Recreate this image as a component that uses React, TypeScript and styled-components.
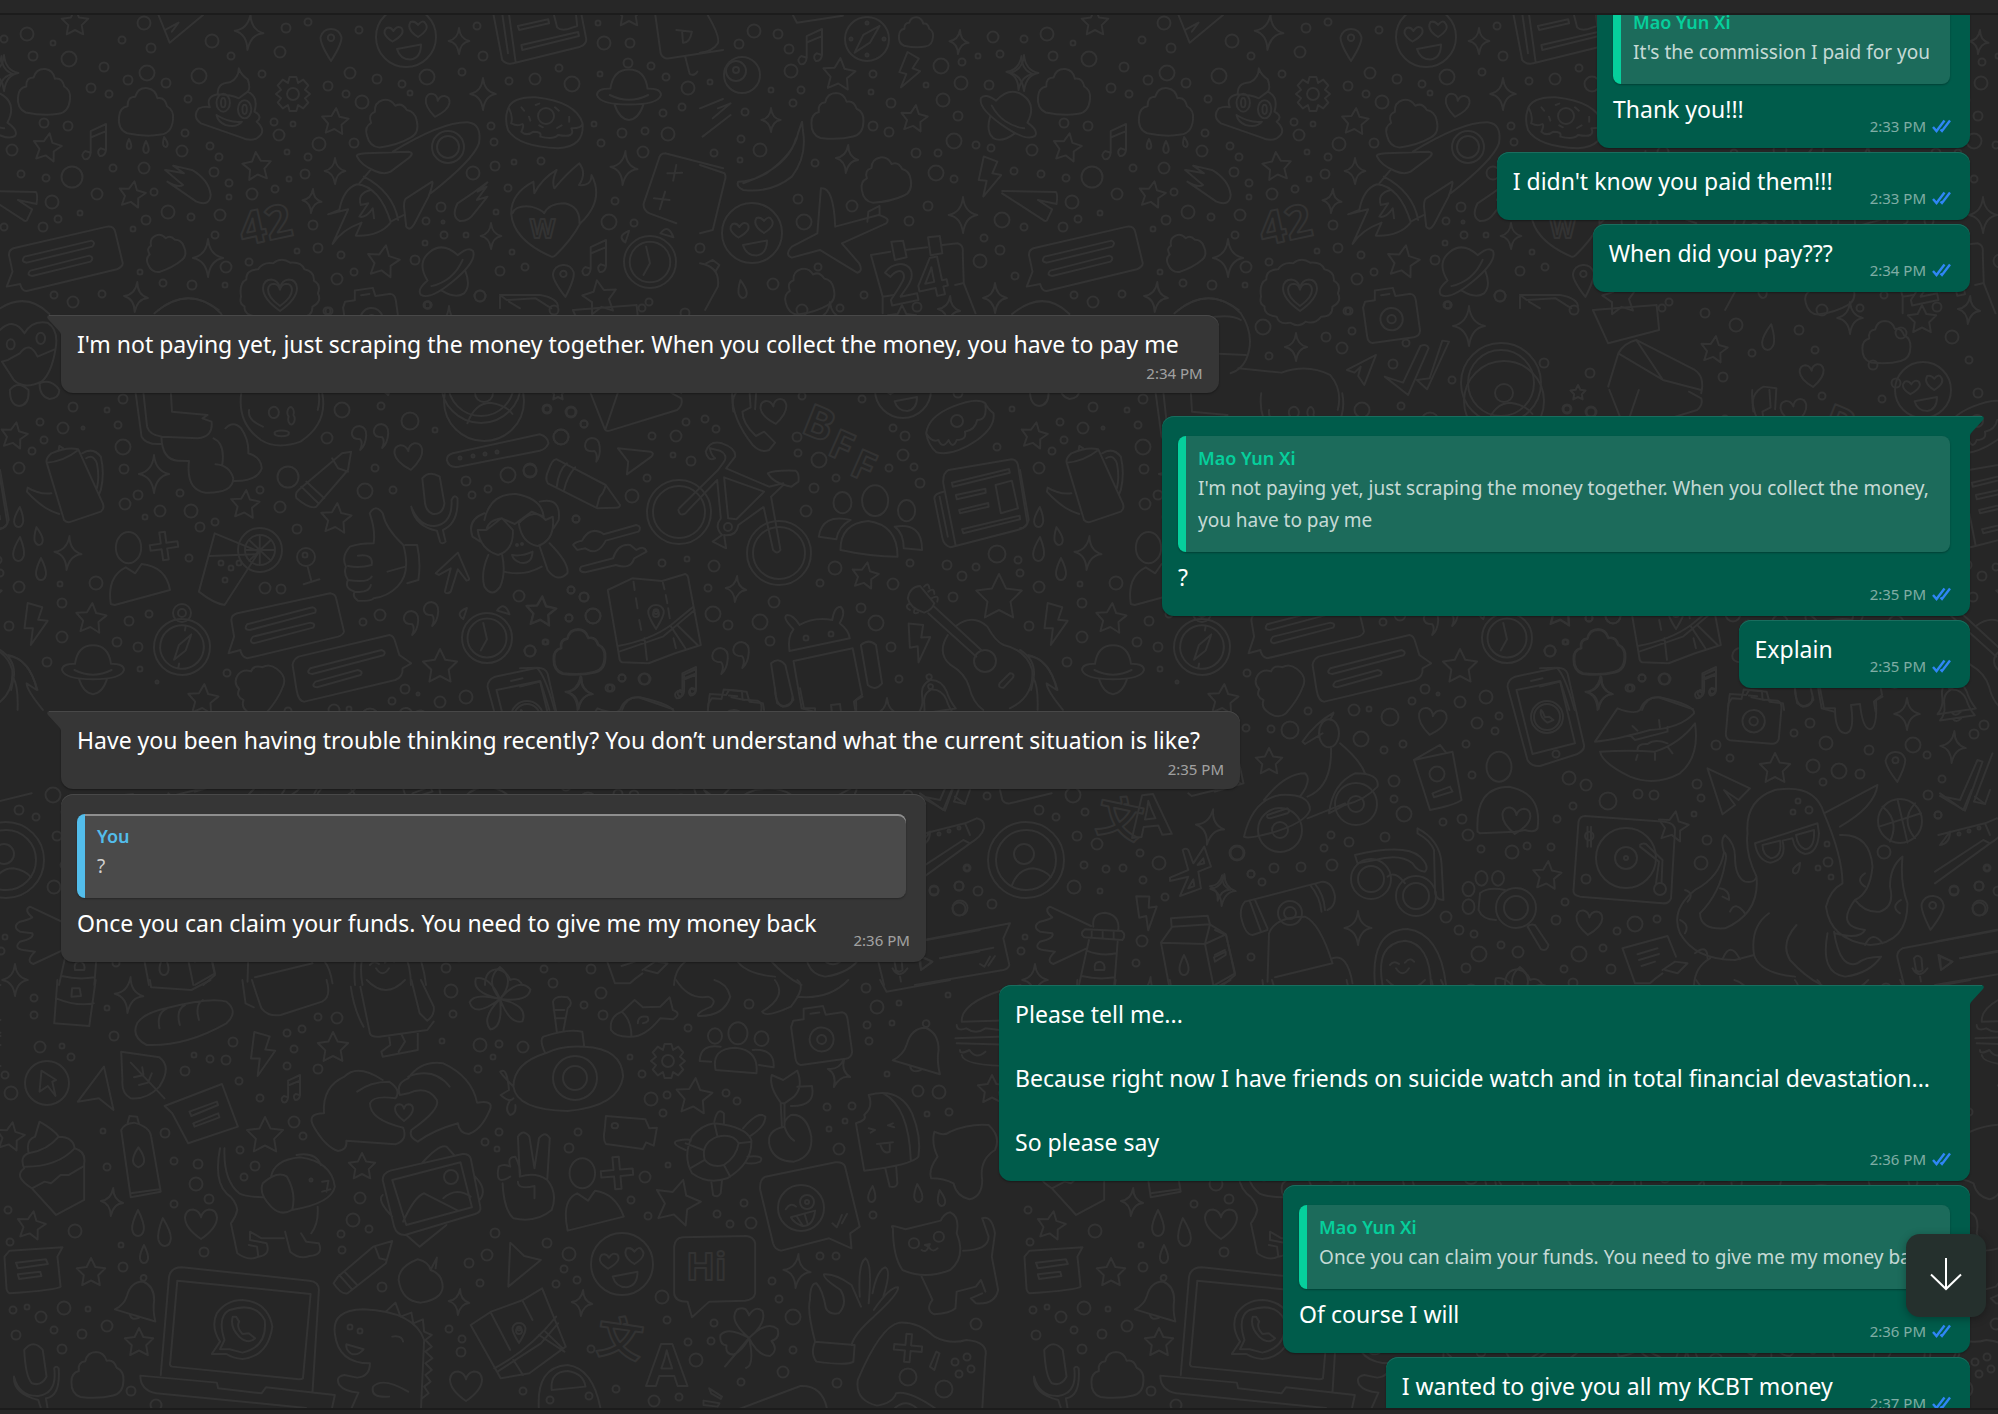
import React, { useLayoutEffect, useRef } from "react";
import styled, { createGlobalStyle } from "styled-components";

/* ---------- theme ---------- */

const color = {
  chrome: "#272727",
  edge: "#1c1c1c",
  wallpaper: "#262626",
  doodle: "#333333",
  outgoing: "#005c4b",
  outgoingEdge: "#1a6d5e",
  outgoingQuote: "#1c6b5b",
  incoming: "#363636",
  incomingEdge: "#484848",
  incomingQuote: "#4a4a4a",
  green: "#06cf9c",
  blue: "#53bdeb",
  tick: "#2f86f6",
};

const GlobalStyle = createGlobalStyle`
  *, *::before, *::after { box-sizing: border-box; }
  html, body { margin: 0; background: ${color.chrome}; }
  body { font-family: "Noto Sans", "Open Sans", sans-serif; color: #fff; }
  p { margin: 0; }
`;

/* ---------- wallpaper ---------- */

type Sheet = {
  ox: number;
  oy: number;
  sx: number;
  dots: string;
  stars?: string;
  sparkles?: string;
  shapes?: string;
  rings?: string;
  lines: string[];
};

const TILE = 1020;

const glyphs: Record<string, string> = {
  cloud:
    "M-.7.75Q-1.05.6-1 .15Q-.98-.2-.68-.25Q-.7-.6-.4-.6Q-.3-.95.05-.92Q.35-.88.42-.55Q.7-.6.78-.25Q1.05-.1 1 .25Q.95.75.55.8Q0 .9-.7.75Z",
  heart: "M0 1Q-1 .3-1-.35Q-.95-.85-.5-.85Q-.1-.8 0-.35Q.1-.8.5-.85Q.95-.85 1-.35Q1 .3 0 1Z",
  drop: "M0-1Q-.5 0-.45.5Q-.35 1 0 1Q.35 1 .45.5Q.5 0 0-1Z",
  bolt: "M-.35-1L.35-.8L.15-.2L.6-.15L-.2 1L-.1.2L-.5.2Z",
  pin: "M0 1Q-.7-.1-.65-.5Q-.5-1 0-1Q.5-1 .65-.5Q.7-.1 0 1ZM.2-.45A.2.2 0 1 1-.2-.45A.2.2 0 1 1 .2-.45",
  note: "M-.35.6L-.35-.6L.5-1L.5.45M-.35-.25L.5-.6M-.35.6Q-.4 1-.7.95Q-.95.7-.65.5L-.35.6M.5.45Q.45.8.15.78Q-.05.5.2.35L.5.45",
  quote: "M.1 1Q.35.4.1.1Q-.6.1-.6-.4Q-.5-1 .05-1Q.65-.9.6-.2Q.55.6.1 1Z",
  plus: "M-.2-1L.2-1L.2-.2L1-.2L1 .2L.2.2L.2 1L-.2 1L-.2.2L-1 .2L-1-.2L-.2-.2Z",
  planet:
    "M-.58-.2Q-.5-.8 0-.8Q.5-.8.58-.2M-.58-.2Q-1-.2-1 0Q-.9.3 0 .3Q.9.3 1 0Q1-.2.58-.2M-.6 0Q-.3.15 0 .15Q.3.15.6 0M-.45.3Q-.3.75 0 .78Q.3.75.45.3",
  gear:
    "M-.2-1L.2-1L.3-.65L.6-.85L.9-.5L.7-.25L1 0L.7.25L.9.5L.6.85L.3.65L.2 1L-.2 1L-.3.65L-.6.85L-.9.5L-.7.25L-1 0L-.7-.25L-.9-.5L-.6-.85L-.3-.65ZM.35 0A.35.35 0 1 1-.35 0A.35.35 0 1 1 .35 0",
  camera:
    "M-.85-.6L-.5-.6L-.45-.95L.2-.95L.25-.65L.8-.65Q.95-.6.95-.4L.95.7Q.9.9.7.9L-.8.9Q-.95.85-.95.65L-.95-.4ZM.4.15A.4.4 0 1 1-.4.15A.4.4 0 1 1 .4.15M.15.15A.15.15 0 1 1-.15.15A.15.15 0 1 1 .15.15M-.25-.75L.05-.75",
  bell: "M0-.7Q-.5-.6-.55 0Q-.6.4-.95.65L.8.85Q.6.4.6 0Q.5-.6 0-.7ZM.12-.85A.12.12 0 1 1-.12-.85A.12.12 0 1 1 .12-.85M-.3.75Q-.2 1 .1.82",
  smile:
    "M1 0A1 1 0 1 1-1 0A1 1 0 1 1 1 0M-.45.15Q-.85-.1-.65-.3Q-.5-.35-.42-.2Q-.3-.4-.15-.3Q0-.1-.45.15M.4 0Q0-.25.15-.5Q.3-.55.4-.4Q.55-.6.65-.45Q.8-.25.4 0M-.3.4L.5.25Q.5.7.15.75Q-.2.75-.3.4Z",
  clock: "M1 0A1 1 0 1 1-1 0A1 1 0 1 1 1 0M.78 0A.78.78 0 1 1-.78 0A.78.78 0 1 1 .78 0M-.15-.6L0 .05L-.25.5M-.95-.75Q-1.3-1-.8-1.2ZM.4-1.1Q.7-1.5.9-.95Z",
  compass: "M1 0A1 1 0 1 1-1 0A1 1 0 1 1 1 0M.78 0A.78.78 0 1 1-.78 0A.78.78 0 1 1 .78 0M.25-.5L.15.1L-.2.5L-.12-.05ZM0-.78L0-.6M0 .78L0 .6",
  flower:
    "M0 0Q-.5-.6 0-1Q.5-.6 0 0Q.6-.7.95-.3Q.9.1 0 0Q.9.2.7.7Q.3.8 0 0Q.1.9-.3.95Q-.6.6 0 0Q-.8.6-.95.1Q-.8-.2 0 0Q-.9-.2-.75-.65Q-.3-.7 0 0",
  clover:
    "M0 0Q-.7-.6-.4-.95Q-.1-1.1 0-.75Q.2-1.1.45-.9Q.6-.5 0 0Q.6-.6.95-.3Q1.05 0 .75.1Q1 .4.7.6Q.3.6 0 0Q.2.9-.1 1M0 0Q-.7-.4-.95-.1Q-1 .2-.75.25Q-.8.55-.5.55Q-.2.4 0 0M0 0L-.8.95",
};

const starPath = (() => {
  let d = "";
  for (let i = 0; i < 10; i++) {
    const r = i % 2 ? 0.5 : 1;
    const a = (i * Math.PI) / 5 - Math.PI / 2;
    d += `${i ? "L" : "M"}${(r * Math.cos(a)).toFixed(2)} ${(r * Math.sin(a)).toFixed(2)}`;
  }
  return d + "Z";
})();
const sparklePath = "M0-1Q.08-.15.8 0Q.12.1 0 1Q-.1.12-.8 0Q-.08-.15 0-1Z";

const sheets: Sheet[] = [
  {
    ox: 0, oy: 0, sx: 0.4464,
    dots:
      "322,70,7 60,101,7 8,117,4 118,130,3 273,120,4 339,143,5 474,124,7 641,84,5 691,65,4 627,156,6 517,168,4 805,90,4 1069,77,4 1082,169,5 1353,130,7 1412,128,5 1407,190,5 1459,198,4 1252,205,4 1343,223,3 1339,69,3 74,168,5 154,177,8 232,200,5 330,220,8 286,240,5 372,250,5 445,228,8 587,223,4 203,265,5 244,282,4 422,297,4 734,259,5 783,218,6 844,238,5 900,252,4 956,231,8 1036,216,4 918,279,3 774,282,4 811,306,7 1141,244,4 1198,236,6 1281,251,8 1491,232,4 1541,263,7 1528,320,4 1486,338,4 1330,371,3 1394,399,5 1446,392,4 1497,403,7 99,369,5 152,378,5 26,449,6 414,399,4 407,452,6 470,438,4 490,472,4 613,365,4 657,371,3 625,406,6 714,432,7 794,428,5 644,457,3 689,470,4 647,538,3 684,522,5 617,566,4 514,548,4 479,515,5 512,590,3 564,582,6 323,504,6 253,503,4 345,575,4 217,582,6 162,532,11 103,535,4 47,521,4 116,605,7 180,638,3 130,656,4 97,680,5 10,680,4 377,636,7 328,660,5 298,686,3 428,652,4 492,645,6 482,706,4 702,676,5 712,743,5 666,752,3 763,766,4 558,786,4 506,801,6 505,854,3 430,855,5 366,850,4 314,815,3 228,882,4 164,906,6 120,886,4 754,836,6 794,816,4 930,781,5 953,728,3 995,705,4 1043,705,3 993,665,2 954,663,4 988,621,5 1111,635,3 1148,755,3 1120,812,5 1176,802,4 1075,887,6 959,915,4 1454,907,4 1364,665,8 1420,670,4 1378,604,4 1139,563,4 1213,482,4 1152,485,3 1109,498,5 1059,518,7 1107,425,4 1101,377,4 1347,430,4 1441,456,6",
    stars: "168,68,14,0 105,443,15,10 751,366,14,5 575,500,15,-5 295,585,14,10 858,786,17,10 1410,42,14,0 1345,895,18,-10",
    sparkles: "558,97,18,5 1028,123,13,0 1083,281,16,0 750,514,13,0 700,604,12,5 1398,505,17,5 465,775,19,0 1101,708,13,0 305,890,15,5 10,220,18,0",
    shapes:
      "cloud,98,278,26,0 cloud,328,338,27,0 cloud,873,370,26,-20 cloud,368,755,20,-30 planet,1410,285,32,0 planet,1002,818,34,-40 pin,742,135,16,0 pin,1263,842,16,-5 heart,978,315,12,10 note,217,425,18,0 note,1338,775,18,0 smile,910,110,30,0 gear,657,283,17,0 drop,288,432,5,0 drop,326,440,6,0 drop,369,425,5,-10 clock,1455,787,26,0 heart,628,882,17,0 heart,628,882,12,0",
    rings: "1003,442,16 1003,442,11 1223,348,8",
    lines: [
      "M880 455Q990 365 1048 367Q1080 372 1073 430Q1060 480 965 580M800 470Q795 462 820 460L915 455Q930 458 915 475L875 515Q860 525 840 513Q808 495 800 470ZM968 545L910 595Q905 600 905 620L910 680Q918 695 928 672L960 590Q972 545 968 545M830 510L805 550M815 530Q880 575 892 660M800 553Q850 560 875 665L905 645M800 553Q770 565 760 630L735 643L780 628L745 732Q765 690 810 668L797 707Q850 710 875 668M830 570Q800 580 808 615L825 610L805 650Q820 655 835 625L838 655",
      "M535 205Q540 225 555 238Q562 265 555 275Q580 290 570 335Q590 350 575 365Q600 395 575 415Q560 425 540 412L450 370Q430 350 445 325Q460 318 470 322Q460 290 488 283Q485 250 515 247Q535 235 535 205ZM485 345Q515 370 542 365Q530 385 505 375Q488 365 485 345ZM488 283Q520 285 535 295L555 275M485 308A15 27 0 1 0 515 308A15 27 0 1 0 485 308M533 328A15 27 0 1 0 563 328A15 27 0 1 0 533 328M495 308A5 14 0 1 0 505 308A5 14 0 1 0 495 308M543 328A5 14 0 1 0 553 328A5 14 0 1 0 543 328",
      "M1137 330Q1145 290 1200 292Q1290 305 1305 370Q1310 440 1250 445Q1160 440 1138 390Q1130 360 1137 330ZM1140 325Q1150 350 1145 370Q1160 380 1170 372Q1175 375 1168 395Q1180 410 1195 395Q1215 395 1210 410Q1240 420 1250 405Q1290 415 1280 385Q1305 385 1305 370M1168 322L1174 332M1200 315L1208 311M1243 322L1252 332M1185 350L1188 362M1275 350L1275 365M1208 376L1216 382M1258 376L1248 384",
      "M30 745L240 680Q255 678 258 695L275 790Q275 800 262 808L60 873Q50 875 45 852L15 860L28 815L20 765Q20 750 30 745ZM55 770L205 722Q215 728 207 740L60 788Q45 785 55 770ZM68 812L200 767Q212 772 203 785L72 828Q58 825 68 812Z",
      "M540 890Q535 850 552 838Q550 810 578 808Q590 785 612 790Q630 770 650 788Q675 785 682 808Q705 815 703 842Q720 855 712 880Q722 905 700 920Q700 950 675 950Q660 975 640 965Q625 985 605 968Q580 975 575 950Q545 945 548 920Q535 910 540 890Z",
      "M1235 770Q1150 720 1145 640Q1145 580 1195 545L1197 580Q1215 535 1247 510Q1235 545 1242 565Q1270 520 1298 490Q1315 520 1297 555Q1325 560 1325 525Q1355 600 1300 670Q1280 720 1245 765Q1240 772 1235 770ZM1148 640Q1155 615 1190 620Q1215 630 1219 640Q1230 610 1265 610Q1300 620 1298 670",
      "M1105 40L1125 180Q1135 195 1150 190L1300 140Q1315 132 1313 115L1302 40M1125 40L1138 160M1140 40L1155 185M1160 78L1228 58L1230 70L1163 90ZM1168 135L1295 96L1297 108L1170 150ZM1240 40L1248 82Q1255 92 1270 88L1293 78L1290 40",
      "M370 510L410 555Q400 565 375 545L440 605Q470 620 472 585Q468 540 430 510L388 497L412 520L372 510M1092 547Q1060 580 1025 610Q1010 650 1030 663Q1050 665 1062 640L1092 590L1068 600L1090 560L1070 575Z",
      "M-40 573L80 576Q85 580 82 612L40 600L72 628L60 662Q55 665 50 658L-40 580M355 45L380 128L455 45M370 90L400 68L385 95",
      "M1468 45L1480 160Q1485 178 1500 175L1620 150M1535 170L1545 222Q1555 230 1562 215M1490 460L1620 505M1490 460Q1478 460 1475 480L1442 610Q1440 630 1455 640L1515 670M1495 520L1528 518M1515 495L1508 542M1465 595L1500 600M1490 575L1478 628M1515 90L1550 95Q1545 130 1530 128L1528 95",
      "M355 930Q420 860 490 930M1120 885L1210 885Q1250 895 1250 920M1120 885L1135 900L1200 895L1235 925M1120 890L1120 925M1165 925L1140 905",
    ],
  },
  {
    ox: 700, oy: 0, sx: 0.5102,
    dots:
      "106,92,7 152,101,5 76,131,5 174,148,5 178,212,7 20,247,3 140,270,3 197,270,4 182,310,4 89,335,4 80,416,4 27,458,4 118,451,7 78,479,3 340,221,4 336,275,3 374,308,5 339,379,5 370,397,5 225,490,4 423,460,5 467,459,4 497,423,8 541,434,4 571,445,4 505,348,5 476,299,7 442,254,3 473,197,8 514,185,4 545,168,3 588,162,4 575,110,6 512,248,7 566,256,5 462,520,8 497,536,4 616,512,4 193,598,5 297,619,6 204,666,8 410,662,5 446,619,5 592,659,8 557,713,4 588,749,5 548,782,7 231,800,4 143,852,6 321,886,4 275,924,4 617,829,4 0,745,5 1269,934,4 1278,994,4 1226,1012,5 1258,1043,6 1103,981,8 1116,1067,4 1473,1139,4 1358,1093,5 1383,1030,4 1464,914,4 327,68,2 327,166,2 295,117,2 360,117,2",
    stars: "273,226,17,5 420,358,14,8",
    sparkles: "508,126,12,5 140,361,12,0 288,478,14,5 628,218,17,5 516,646,18,0 578,893,15,0 1168,1040,14,0 1508,977,20,0",
    shapes:
      "cloud,423,98,17,0 cloud,268,352,26,-5 cloud,363,540,25,-15 cloud,211,873,25,-20 planet,603,350,33,35 bolt,410,213,18,15 bolt,567,530,20,5 drop,83,867,9,-10 smile,102,700,30,0 note,222,140,18,0 camera,1355,945,28,-8",
    rings: "327,117,22 83,224,18 70,213,10 70,211,3 1570,1150,40 1570,1150,33",
    lines: [
      "M352 78L333 128L303 158L320 105ZM200 365L192 400Q185 460 130 520Q100 545 75 545Q70 560 85 570Q140 580 180 530Q210 470 202 395ZM188 415Q175 500 85 550",
      "M237 565Q262 560 265 680L350 645Q375 655 365 670L278 730L312 790Q320 815 308 818L235 750L180 773Q165 765 180 740L230 700ZM328 665L330 635L352 618L352 645",
      "M335 765L373 755M402 750L445 742M475 735L505 730Q517 735 515 760L517 850L540 940M335 765L358 890L358 940M358 890L380 885M500 855L515 850M375 725L398 722L405 772L382 780ZM447 712L470 708L475 760L452 766Z",
      "M1325 1065L1268 1110L1283 1118L1295 1100L1290 1128L1302 1155ZM1342 1130L1378 1148L1412 1038Q1425 1030 1428 1045L1388 1185ZM1405 1140L1430 1135L1455 1022L1468 1025L1425 1168Z",
      "M930 940Q1000 850 1060 940Q1090 1010 1070 1080Q1060 1110 1040 1120M1055 1105L1140 1118Q1190 1090 1235 1125Q1260 1170 1250 1230M990 955Q1040 940 1060 960M995 1060L1070 1065",
      "M0 495L48 520Q52 530 48 545L25 690L0 700M0 790Q40 800 35 860L10 930M12 790L25 780L38 795L30 815M15 45Q40 110 35 130Q25 155 0 158M182 45L190 68L280 47M5 410L60 345M0 325L45 297M25 355L60 310L35 325",
    ],
  },
  {
    ox: -1020, oy: 0, sx: 1.2743,
    dots:
      "1212,1090,5 1248,1120,5 1352,1130,5 1338,940,5 1362,975,7 1375,1060,4 1412,990,5 1424,1050,4 1470,1095,5 1430,930,6 1488,1150,5 1492,1000,6 1520,920,5 1532,1010,7 1545,1080,4 1552,1180,5 1235,930,5 1304,925,4",
    stars: "1345,1050,14,8 1508,960,15,0",
    sparkles: "1452,955,16,0 1545,930,14,5",
    shapes: "drop,1388,1010,13,10 heart,1422,1125,12,-5 cloud,1480,1030,24,-5",
    lines: [
      "M1262 1160L1270 1060Q1274 1030 1284 1020L1330 1110Q1338 1130 1335 1180M1270 1060L1305 1140L1284 1020M1305 1140L1335 1170",
      "M1376 1235Q1373 1180 1384 1160L1394 1165L1393 1228M1250 930L1300 915L1302 990L1262 1030Z",
    ],
  },
  {
    ox: 0, oy: 290, sx: 0.3954,
    dots:
      "832,64,4 1083,45,4 1214,17,6 312,326,5 184,350,5 271,359,3 866,360,8 964,348,4 1036,394,9 1101,420,3 827,443,6 1384,356,5 1445,366,6 1477,403,4 1419,442,8 102,395,4 159,413,6 211,415,2 299,405,4 111,450,4 80,484,4 312,471,8 49,535,6 314,537,5 348,615,5 317,642,6 405,663,6 484,664,7 455,610,4 366,681,3 505,710,5 545,696,4 657,599,4 707,652,6 728,560,11 752,716,5 948,535,4 923,602,8 994,600,4 1178,572,5 1194,614,4 1234,597,4 1284,556,8 1340,541,7 1456,686,4 477,804,4 243,878,7 153,883,3 49,890,6 158,940,5 22,1007,5 158,1040,6 297,1057,5 348,1071,5 327,994,5 376,971,4 120,1117,5 355,1137,3 398,1177,2 573,1148,4 669,893,6 710,897,5 917,997,4 960,976,6 1312,917,6 1445,900,4 1478,920,5 1438,983,4 1499,979,8 1380,1055,3 1340,1082,6 1163,505,2 1195,498,2 1226,492,2 1258,487,2 560,820,3 584,833,3 605,820,3 569,870,3 772,796,3 1308,765,1 1321,763,1",
    stars: "35,438,14,10 620,645,15,5 850,688,16,5 231,988,16,5 1368,965,15,5 1113,1132,18,0",
    sparkles: "389,551,19,0 171,790,17,5",
    shapes:
      "quote,908,443,12,0 quote,964,437,12,0 quote,1040,1000,12,0 quote,1090,973,12,0 heart,1035,497,14,-8 plus,415,768,14,-8 bolt,88,1002,21,0 planet,236,1140,31,0 cloud,1465,1090,25,-5 drop,49,682,10,5 drop,97,737,9,-10 drop,49,778,12,5 drop,103,836,11,0 compass,460,1070,28,10 clock,1232,1043,25,0",
    rings: "461,970,9 461,970,4 657,780,22 657,780,15 773,800,9 1225,333,40 1225,310,9",
    lines: [
      "M657 735L657 825M620 780L695 780M630 750L685 812M685 750L630 812M543 730L655 785L568 945Q540 940 503 905ZM530 798L650 793M778 830L788 875M768 883L808 868",
      "M293 773A32 47 0 1 0 357 773A32 47 0 1 0 293 773M280 942Q270 860 318 832L342 850L358 822Q420 830 430 900L290 945Z",
      "M935 670Q950 640 968 670Q975 715 1020 765Q1040 850 1005 890Q980 920 945 925Q940 935 905 932Q890 920 897 905Q870 895 880 870Q868 850 875 830Q862 800 885 770Q910 760 945 760Q950 720 935 670ZM905 797Q945 790 940 825Q910 835 880 828M880 870Q930 880 940 860M897 905Q935 910 938 885M980 845L1025 830M1025 765L1055 765Q1065 820 1058 870L1030 880",
      "M1068 565Q1085 540 1112 560L1124 640Q1120 675 1095 672Q1078 665 1075 640ZM1040 650Q1060 710 1100 708Q1145 700 1142 630Q1150 610 1157 625Q1160 700 1120 720L1127 755Q1118 765 1113 755L1105 722Q1050 710 1040 650",
      "M1158 788L1102 850L1110 855L1140 835L1125 905Q1130 915 1140 905L1158 838L1180 872Q1190 870 1185 862Z",
      "M865 490L888 485L880 540L800 650Q785 660 750 625Q745 610 755 600ZM762 590L805 640M775 575L820 625M840 505L855 535L880 545",
      "M600 970L835 910Q848 912 850 925L870 1025Q868 1035 855 1040L625 1105Q610 1100 608 1080L578 1090L592 1040L585 990Q585 975 600 970ZM625 1003L790 952Q802 955 797 968L632 1020Q615 1020 625 1003ZM640 1040L785 998Q800 1000 792 1013L642 1060Q628 1055 640 1040Z",
      "M755 1100L985 1035Q995 1038 998 1050L1010 1095L1040 1120L1018 1135Q1020 1160 1000 1170L770 1235Q755 1235 750 1200L740 1125Q742 1108 755 1100ZM785 1135L965 1080Q978 1085 970 1096L790 1152Q772 1150 785 1135ZM798 1175L905 1140Q920 1145 912 1155L802 1192Q785 1190 798 1175Z",
      "M118 518L162 690Q170 700 180 695L255 665Q265 655 260 640L198 478Q170 470 130 490Q115 505 118 518Q160 515 198 480M148 482L150 468L160 475M130 610Q100 615 70 593L68 605Q110 660 150 672M208 490Q235 470 255 500Q265 550 255 600L250 615M218 505Q235 490 245 520Q252 560 245 595",
      "M1145 490L1365 433Q1385 440 1387 460Q1380 478 1365 482L1160 530Q1135 535 1130 510Q1130 495 1145 490Z",
      "M342 300L358 440Q370 465 407 462M362 300L372 410Q378 435 410 440L500 445Q540 440 535 395L512 385L525 375L435 365L432 305M408 440Q410 510 450 512L478 513Q470 600 520 608Q590 610 590 565Q580 525 545 523M562 525Q570 460 540 445M570 415Q590 390 610 415Q630 450 628 490Q660 500 662 535Q650 575 590 573",
      "M610 310Q600 400 660 450Q700 480 760 455Q830 400 815 310M630 360Q625 390 665 410M680 370A12 16 0 1 0 705 365A12 16 0 1 0 680 370M730 380A8 16 0 1 0 742 375A8 16 0 1 0 730 380M695 430A18 7 0 1 0 730 430A18 7 0 1 0 695 430",
      "M1182 400Q1200 340 1240 338Q1280 345 1296 372M1225 690Q1240 610 1305 612Q1370 625 1375 680L1345 665L1302 702L1268 685L1230 720M1208 720Q1215 780 1260 795Q1300 780 1297 720L1270 685Q1235 690 1230 720ZM1312 700Q1320 760 1360 768Q1405 750 1398 680L1380 690Q1350 650 1312 700ZM1235 795Q1215 850 1225 890Q1245 925 1265 890Q1280 850 1270 795M1390 760Q1440 820 1435 850Q1410 880 1385 840L1365 770M1275 845Q1325 860 1370 830M1295 795Q1320 800 1347 785Q1345 825 1315 818Q1298 810 1295 795M1225 670Q1180 690 1195 740L1215 755M1365 635Q1420 620 1413 690L1400 715",
      "M-20 72Q60 -5 125 72M0 120Q35 80 62 130Q80 90 120 98Q150 120 140 180Q130 250 105 275Q60 300 35 270L5 215L20 210L50 190Q75 150 95 200L138 178M25 300Q45 270 72 300Q75 345 48 348Q25 345 25 300M100 280Q130 265 150 300Q150 325 125 327Q100 320 100 280M17 163A10 15 0 1 0 37 163A10 15 0 1 0 17 163M92 145A11 17 0 1 0 114 145A11 17 0 1 0 92 145",
      "M0 540L22 690Q15 715 0 715M0 1080Q40 1110 35 1160L28 1200M20 1098Q70 1100 95 1200",
    ],
  },
  {
    ox: 520, oy: 390, sx: 0.4082,
    dots:
      "66,57,4 125,67,5 158,103,4 101,142,8 24,242,7 323,137,4 407,96,4 452,86,4 481,116,4 382,137,6 375,196,3 419,214,5 310,265,4 275,319,7 137,386,4 349,520,4 409,508,3 476,527,6 461,594,4 623,636,6 472,672,8 510,704,5 587,695,8 612,753,5 125,601,4 158,621,5 178,679,8 119,683,4 62,755,3 24,782,6 251,864,4 306,866,6 222,893,4 678,140,5 681,190,4 733,210,8 720,295,5 700,364,6 773,265,4 914,114,4 943,138,5 939,194,6 904,235,4 966,232,4 981,280,5 838,27,4 1206,58,3 1169,172,4 1169,492,9 1219,511,4 1226,550,4 1117,530,4 1082,558,5 1045,524,5 956,520,4 771,533,7 735,579,4 913,581,6 1060,622,5 836,655,5 873,700,8 910,770,5 929,866,4 690,17,4 700,745,3 761,731,3",
    stars: "52,667,16,5 845,557,14,10 1173,625,24,0 93,8,8,0",
    sparkles: "530,597,13,5 145,910,17,5",
    shapes:
      "cloud,145,790,26,-5 quote,490,812,13,0 quote,542,795,13,0 quote,180,180,12,-10 heart,622,64,13,-8 smile,938,0,28,0 pin,332,680,12,0 note,412,880,16,0 bolt,978,755,20,-10 bell,1015,915,22,-15",
    rings: "390,366,32 390,366,26 634,489,32 634,489,26 1140,812,11 509,412,4 1070,92,6 332,672,3",
    lines: [
      "M240 175L320 185Q330 190 322 200L262 253L265 215ZM995 130Q1000 80 1060 50Q1120 20 1140 40Q1145 55 1160 70Q1165 110 1120 150Q1060 200 1020 187Q1000 165 995 130Q1010 160 1025 150Q1035 180 1050 150Q1060 180 1070 150Q1095 150 1090 125Q1115 120 1120 90Q1145 90 1140 45",
      "M520 0Q515 80 570 165Q590 190 610 180L625 158L598 125L578 138Q545 100 545 65L565 52L562 0M170 0L208 118Q212 125 220 122L385 60Q400 45 395 25L365 5M242 0L210 115",
      "M90 208L210 285L245 345Q245 353 235 353L190 355L68 280Q60 265 70 240Q80 205 90 208ZM115 220Q95 240 90 290M135 232Q115 260 108 300M210 285Q205 310 195 320L188 352",
      "M130 465Q135 455 152 452Q170 410 200 428L205 433L285 405Q300 410 290 425L210 452Q190 500 160 475L140 480ZM150 530L228 505Q240 460 270 465L285 480Q305 465 310 485L280 505Q270 540 235 525L160 547Q140 545 150 530Z",
      "M390 355L485 240L500 215Q510 195 490 182L465 175Q468 195 478 205Q460 215 455 185Q465 150 495 160Q530 175 527 200L505 235L610 290L645 280M405 370L483 270M388 360Q390 380 405 370M500 262L598 305L530 388L510 385ZM483 270L492 385Q475 410 495 435L472 455L505 475L500 435M595 352L535 405Q530 440 500 435M615 320L638 480Q630 495 620 480L597 352M615 320L645 285M607 250Q620 240 675 242Q685 250 682 275L665 290Q620 280 607 250Z",
      "M768 338A22 32 0 1 0 812 338A22 32 0 1 0 768 338M838 332A32 46 0 1 0 902 332A32 46 0 1 0 838 332M926 362A21 32 0 1 0 968 362A21 32 0 1 0 926 362M785 480Q785 400 853 393Q925 405 925 500Q860 500 785 480ZM775 448L732 440Q740 370 810 390Q780 410 775 448M918 410Q985 395 985 480L940 475Q940 430 918 410",
      "M1050 240L1205 208Q1217 210 1220 225L1243 400Q1240 412 1225 418L1055 472Q1038 465 1035 445L1015 325Q1015 310 1038 305M1050 240Q1035 250 1037 280L1067 465M1028 320L1048 440M1058 278L1198 237L1200 248L1060 290ZM1068 315L1140 296L1141 308L1070 328ZM1076 360L1147 339L1148 350L1078 370ZM1083 418L1224 377L1225 388L1086 430ZM1165 285L1205 272L1220 355L1178 370Z",
      "M215 600L275 565L348 573L405 552Q412 555 413 570L443 765L380 790L315 820L250 817Q243 812 243 800ZM240 768Q320 750 370 705L425 650M243 785L350 740L428 660M370 710L405 775M385 705L435 765M278 575L281 600M284 625L288 655M292 690L297 720M305 745L311 810M350 578L354 598M357 615L361 640M363 655L367 685M376 745L382 775",
      "M660 783Q655 740 670 718Q640 680 655 675Q670 675 685 705Q720 680 765 690Q770 650 785 650Q800 665 783 700Q805 720 808 745ZM670 813L815 775L838 915L818 935L822 965M670 813L690 955L720 965M615 820Q635 800 650 825L670 930Q650 960 630 940ZM835 765Q855 745 872 765L887 880Q870 905 852 885Z",
      "M950 625Q955 590 980 588L1015 640Q1010 660 990 668Q955 655 950 625ZM990 590Q1000 575 1003 595M1000 605Q1015 590 1015 612M1008 625Q1028 612 1022 635M955 640Q940 650 955 660M968 655Q960 675 975 668M1015 650L1130 780M1000 670L1118 800M1068 708Q1110 670 1145 710Q1165 755 1185 765Q1240 780 1255 840Q1260 920 1200 955M1048 735Q1020 790 1055 825Q1090 850 1100 890Q1110 940 1135 960M1175 880L1200 850Q1212 850 1208 862L1185 893Q1170 895 1175 880M1245 795Q1300 810 1315 900L1290 880Q1290 900 1330 960M1258 865Q1270 890 1268 960",
      "M0 835L40 833Q60 850 85 960M0 890L50 875L72 960M250 960Q260 920 290 922L375 958M460 960L465 912L505 915L512 900L555 905L562 935L595 940L598 960M518 922L550 930",
    ],
  },
  {
    ox: 195, oy: 600, sx: 0.5,
    dots:
      "419,268,5 393,304,4 446,281,2 490,306,6 541,291,7 186,334,4 277,329,6 308,326,3 350,350,9 292,417,8 61,384,4 112,386,4 150,391,9 338,449,4 375,432,4 523,370,6 568,347,4 560,393,4 502,433,4 513,525,4 358,543,6 357,596,4 378,643,8 455,667,4 493,656,5 505,706,6 339,711,5 267,726,5 232,706,4 218,744,4 43,759,8 118,803,5 171,800,5 233,796,6 71,823,4 94,847,4 531,747,4 593,755,7 624,737,4 671,740,4 683,656,4 716,618,4 786,602,9 846,581,5 877,586,5 707,535,7 741,555,6 1002,435,5 1029,473,4 963,552,5 971,595,4 958,641,3 983,721,5 971,788,7 741,836,5 700,906,4 682,961,5 840,973,8 884,957,4 804,992,4 775,1045,4 727,1062,8 698,1106,4 792,1107,5 606,1055,6 571,1036,4 527,1062,8 488,990,5 518,1001,4 501,1104,5 461,951,6 72,1072,4 1158,400,4 1189,370,5 1222,430,7 1308,450,5 1395,434,8 1424,466,4 1195,498,7 1247,512,8 1289,522,5 1215,546,4 1453,537,4 1425,585,5 1446,645,4 1337,757,7 1478,871,5 1528,857,5 1529,925,8 1544,804,4 1518,403,5 1537,374,5 828,264,4 898,236,6 854,235,4 1166,604,3 1187,629,4 1155,637,3 1224,731,3 1226,786,5 1206,805,3 1232,830,3 443,522,8 681,462,4",
    stars: "15,300,16,5 107,485,14,0 664,828,15,5 1119,508,16,0 915,680,16,10",
    sparkles: "770,280,16,5 285,985,17,0 15,870,16,5 1384,343,16,0 1475,442,16,5",
    shapes:
      "cloud,125,265,26,-60 heart,434,362,14,10 heart,748,965,13,5 heart,602,660,14,5 pin,1362,500,15,-5 pin,1433,940,17,5 camera,1078,350,28,5 note,987,248,14,0 bell,1480,310,20,-15 drop,1163,804,6,30",
    rings: "663,350,16 663,350,13 282,612,21 282,612,8 130,690,22 130,690,8 312,838,20 312,838,13 402,888,20 402,888,13 150,938,12 150,938,6 601,925,20 601,925,12 821,773,30 821,773,11 821,773,2 889,866,6 1370,663,22",
    lines: [
      "M600 230L685 203Q700 203 705 220L738 435Q740 450 725 462L650 498Q632 500 625 480L585 260Q585 240 600 230ZM603 270L690 243L720 430L635 462ZM632 243L655 235M652 330Q648 350 665 368L677 360L668 350L660 352L655 335Z",
      "M760 425L805 325Q840 345 850 330Q860 290 890 292Q960 315 958 340Q930 385 870 390Q800 420 760 425ZM770 455Q830 450 880 455Q930 430 960 370Q970 470 930 520Q880 560 830 530Q775 490 770 455ZM830 405L840 420L905 395L905 380M845 450Q845 430 865 432Q880 415 905 430M845 465L842 480M880 460L880 480M905 440L915 460M835 378L845 392M888 360L890 385",
      "M237 338Q200 370 175 425L180 432L215 400M237 340L230 360M208 400A20 42 0 1 0 248 400A20 42 0 1 0 208 400M232 440Q235 560 185 590M250 430Q290 480 300 520M58 710Q75 600 130 585Q190 580 190 630Q180 670 110 700Q65 718 58 710ZM98 600Q140 520 180 520Q195 540 170 590M185 655L260 610M228 640Q235 550 280 520Q330 520 325 560Q300 600 260 615ZM105 645L145 625Q152 632 145 640L110 655Q102 655 105 645Z",
      "M398 480L450 435L462 458M398 480L475 455L493 600Q480 615 430 630ZM435 580L470 560L475 575L438 592ZM543 500A25 45 0 1 0 593 500A25 45 0 1 0 543 500M525 695Q520 560 588 560Q655 580 645 685Q640 700 620 690L600 695L530 700Z",
      "M280 765Q380 730 410 770Q430 800 420 815Q405 815 395 790Q370 760 320 780L285 790ZM345 830Q360 810 380 850M405 685Q450 720 453 790L457 900Q440 900 440 870L438 750Q430 720 405 700Z",
      "M60 905L215 845Q235 845 240 890Q240 920 225 930M60 905Q50 920 52 950Q60 1005 75 1005L105 990M70 905L92 995M80 900L105 985M190 855Q210 890 213 935M200 852Q218 885 220 930M105 1145L108 1000Q120 950 180 950Q210 970 235 1090L120 1132M235 1075Q265 1060 275 1150",
      "M521 835A12 22 0 1 0 545 835A12 22 0 1 0 521 835M554 835A12 22 0 1 0 578 835A12 22 0 1 0 554 835M495 867A12 22 0 1 0 519 867A12 22 0 1 0 495 867M495 920A12 22 0 1 0 519 920A12 22 0 1 0 495 920M580 870Q545 860 530 880L527 930Q535 960 562 960M625 980Q630 970 640 975L667 1035Q665 1055 652 1048Z",
      "M740 648L900 665Q920 670 920 690L912 895Q908 912 895 910L730 890Q715 885 717 870L727 665Q730 648 740 648ZM850 735Q855 728 862 732L895 780L893 850M850 740L888 785L882 850M745 680L745 740M752 680L752 740M740 708A8 12 0 1 0 757 708A8 12 0 1 0 740 708",
      "M320 1155Q310 990 385 987Q450 1000 462 1155M335 1155Q320 1030 380 1022Q430 1030 432 1155M350 1095Q358 1080 368 1092M380 1088Q390 1070 398 1085M362 1105Q375 1135 388 1105M580 1155Q580 1110 605 1108Q625 1115 630 1140Q645 1130 655 1155M0 990L22 1005L40 1120L0 1155M0 1065L20 1050",
      "M985 505L1070 565L1047 600L1018 570L1040 615L1015 643ZM1335 620Q1370 660 1350 725M1400 610Q1370 660 1400 715M1328 680L1412 640M1365 598L1385 728",
      "M1065 700Q1060 600 1120 570Q1200 550 1218 640L1325 555Q1320 620 1250 680M1250 705Q1310 700 1315 800Q1310 880 1280 900Q1300 940 1330 935Q1360 920 1350 860Q1350 800 1375 770Q1370 850 1385 910Q1385 1030 1310 1035Q1230 1020 1222 920Q1230 870 1255 850Q1255 770 1218 640M1065 700Q1060 760 1083 830Q1090 940 1020 985Q970 990 970 940Q1010 880 1020 790Q1025 760 1018 757Q1010 830 960 870Q910 930 930 1000Q960 1080 1040 1080L1078 1065Q1070 980 1108 940M1083 830Q1080 850 1060 845Q1040 830 1040 770Q1040 730 1020 705Q1010 720 1018 757M1163 975Q1130 1030 1150 1080Q1180 1130 1213 1155M1225 1000Q1210 1120 1260 1130Q1310 1120 1332 1070Q1300 1070 1285 1090Q1250 1110 1238 995M1280 900Q1240 980 1300 990Q1290 1020 1240 1000M1078 1065Q1090 1120 1160 1130M990 1075Q960 1100 958 1155",
      "M1080 730L1205 670L1208 700Q1205 760 1180 762Q1160 755 1155 715L1135 722Q1145 780 1110 788Q1085 780 1080 730ZM1095 735L1130 722Q1135 770 1112 775Q1095 765 1095 735ZM1162 705L1198 690Q1200 745 1180 748Q1165 740 1162 705ZM940 870Q960 880 945 905M1010 865Q1030 870 1028 900L1015 890M1030 935Q1040 900 1060 940M930 960Q950 975 940 1000M960 1060Q985 1030 985 1075M1015 1078Q1030 1020 1050 1078M1300 1035Q1315 990 1335 1030M1372 900Q1350 920 1370 940M1300 820Q1280 840 1300 860",
      "M1450 588L1490 600L1525 480L1535 485L1500 632ZM1518 605L1555 460M1540 612L1518 605M815 1045L905 1008L922 1070M815 1045L840 1150L870 1150Q880 1135 895 1120M845 1063L885 1045M848 1080L888 1062M853 1098L880 1085M895 1110L920 1085L945 1090L925 1120L900 1110",
      "M1570 990L1375 1045Q1362 1055 1365 1075L1378 1155M1450 1070L1475 1085L1452 1110ZM1490 1075L1568 1055M1398 1075Q1405 1060 1413 1075L1415 1110Q1408 1120 1402 1110ZM1395 1105Q1408 1140 1425 1105M1410 1130L1412 1145",
      "M0 445L40 435L57 550L0 575M0 475L20 505L50 550M20 505L40 440M1160 265Q1160 310 1175 320Q1195 320 1195 290M1210 265L1218 325L1240 325Q1240 400 1262 400Q1280 395 1272 315L1290 312Q1295 385 1310 388Q1325 385 1322 300L1335 290",
    ],
  },
  {
    ox: 915, oy: 780, sx: 0.3333,
    dots:
      "215,47,4 373,90,5 423,110,4 510,95,4 473,44,8 486,168,5 545,193,6 507,254,4 572,268,4 625,265,4 476,321,7 556,332,3 675,220,4 733,248,7 683,300,4 751,350,4 965,218,7 1008,283,4 682,484,6 662,550,4 317,512,4 330,471,3 56,332,5 132,319,5 188,334,5 232,371,5 133,386,7 157,265,3 10,105,4 71,162,2 102,154,2 132,145,2",
    sparkles: "885,140,18,10 915,325,13,10 360,600,16,0",
    shapes: "bolt,695,395,18,-15 drop,807,555,10,0",
    rings: "334,240,38 334,240,30 328,222,10",
    lines: [
      "M290 318Q310 265 355 265Q390 270 408 292M803 210Q812 203 820 210L835 250L868 200L888 260L850 275L858 325L795 348L820 290L765 303L765 293L820 270ZM848 255L865 235L868 250ZM820 325L835 298L838 318Z",
      "M738 488L772 440L885 433L933 463L960 585L925 615M738 488L762 615M738 488L870 492L895 615M870 492L933 463M885 433L870 492M770 440L768 415L878 407L885 433M897 532L932 515L932 525L900 545Z",
      "M535 440Q530 400 570 398Q615 405 610 450M510 448L620 453Q635 465 622 480L508 472Q492 460 510 448ZM530 450L530 473M563 452L563 476M596 453L596 478M522 480L492 615M608 485L598 615M515 512Q560 530 604 520M500 588Q550 600 598 592M540 570Q535 545 555 545Q572 550 568 570ZM528 438L405 380Q385 390 412 412Q400 420 375 425Q350 440 375 455L412 460Q420 475 375 485Q355 505 385 510L420 515Q390 545 415 552L515 505",
      "M0 485L285 430L265 475L283 555Q280 567 265 570L0 615M10 525L52 545L18 570ZM75 535L235 503M195 552L208 560L225 530M220 557L240 528",
      "M10 165L150 130L185 115Q210 120 207 145Q200 170 165 190L0 310M0 275L145 180L165 190M45 155Q45 190 15 195ZM150 130L165 165M15 40L85 90L110 30M120 50L150 72L165 30M255 30L262 60Q270 72 285 70L410 40M820 40L830 48L975 12",
    ],
  },
  {
    ox: 0, oy: 980, sx: 0.6378,
    dots:
      "53,53,4 54,104,4 167,85,3 179,167,5 62,201,6 97,197,3 112,230,4 304,226,3 329,237,4 355,239,5 290,272,5 375,302,4 365,185,5 450,159,4 474,146,4 499,111,4 529,115,6 461,207,4 450,259,4 499,268,5 407,354,4 693,184,3 752,196,7 783,193,4 820,200,6 773,232,3 749,268,4 707,32,7 710,103,4 867,10,5 916,75,4 942,39,6 946,106,5 988,232,3 1006,281,4 1079,144,4 1174,72,5 1358,24,5 1375,80,7 1410,69,3 1359,135,4 1398,130,3 1363,184,4 1487,45,3 1391,282,3 1440,332,6 1473,337,7 1453,401,3 1488,395,4 1336,377,4 1296,380,4 1325,422,3 1300,447,3 1315,508,6 1021,357,7 1046,345,4 1040,398,4 1139,338,4 1155,362,4 906,456,4 892,505,5 782,456,4 761,486,4 779,508,3 1048,554,3 1012,591,6 990,661,4 1016,708,4 1167,668,4 1124,703,4 1144,733,4 1178,729,6 1369,705,4 162,452,3 259,459,5 461,426,6 475,468,4 376,511,4 400,558,5 382,592,4 273,544,4 168,560,4 310,553,5 307,613,7 327,656,5 273,672,4 117,752,7 189,795,3 193,861,5 320,816,5 564,655,6 553,719,7 579,748,4 534,761,4 537,811,4 599,920,5 735,849,5 764,825,6 776,759,5 753,910,4 858,788,5 892,823,7 884,867,4 904,899,4 871,913,4 704,1048,4 725,1076,4 723,1116,5 927,1106,4 1046,1020,4 1038,950,7 1092,1140,7 1079,1087,4 1119,1030,4 1115,1082,4 1244,1011,8 1221,957,4 1210,903,4 1243,1110,4 1227,1176,6 1162,1205,4 1313,1209,5 1064,1251,4 1026,1263,6 966,1226,4 820,1233,4 205,1233,5 245,1276,6 97,1107,5 128,1063,5 167,1039,6 100,985,7 138,988,3 85,1050,4 64,1012,6 25,1064,5 20,990,4 42,980,3 12,690,4 15,785,4 1285,827,4 1311,829,4 1497,1145,4 1516,1130,4 1504,1182,4 1523,1168,4 1530,1033,6 1423,1190,9 1480,1228,9 8,286,4 17,338,7 549,1042,3 565,1052,3 488,600,2 863,1261,4 923,1248,4",
    stars: "522,203,16,0 1088,352,19,5 415,467,19,0 567,560,14,0 48,738,15,10 142,878,15,0 218,1090,15,0 1556,330,15,0 15,470,15,10 1062,668,24,15",
    sparkles: "202,45,18,5 1316,280,15,20 175,667,14,5 720,965,13,5 912,970,13,5 1250,873,17,5",
    shapes:
      "bolt,411,222,22,0 drop,217,728,13,0 drop,257,757,14,-5 drop,226,823,9,0 drop,1367,643,8,5 drop,1440,640,9,-5 drop,1476,655,8,-10 heart,315,728,16,0 heart,730,1215,16,0 heart,633,395,9,0 cloud,152,1187,26,-5 gear,1047,243,17,0 camera,1287,165,30,-8 bell,1445,200,28,10 bell,220,955,24,10 flower,784,58,32,0 plus,968,578,16,-5 smile,976,853,31,0 clover,1175,1075,30,0 note,460,328,14,0 pin,814,1058,10,0 plus,1423,1105,14,5",
    rings: "73,310,22 902,295,22 902,295,12 707,590,7 1256,683,23 1266,665,7 1266,665,2 814,1052,3",
    lines: [
      "M65 272L88 300L82 305L87 348L75 318L62 335ZM163 260L178 390L155 355L122 365ZM800 788L822 828L848 840L797 920ZM190 215L250 232Q270 260 250 320Q230 360 205 355Q190 340 192 300ZM205 248L258 355M210 292L225 285L223 262M218 315L232 308L238 280",
      "M258 378L348 312L373 440L295 490L270 400ZM297 395L340 365L342 375L300 408ZM303 430L342 400L344 412L305 440ZM190 450Q195 430 210 428Q235 440 237 470L252 635L205 652ZM200 430L203 408L215 410L218 432M205 640L250 628M217 502Q200 550 217 562Q235 550 217 502Z",
      "M215 130Q225 100 260 85Q330 50 355 65Q375 95 355 130Q290 200 230 195Q205 170 215 130ZM250 145Q245 100 262 85M282 135Q275 90 290 75M312 120Q305 75 318 60M62 425Q85 450 92 470Q115 470 117 505Q135 515 132 550L132 660L88 705L50 625Q20 590 38 565Q30 530 45 520Q40 480 55 470ZM50 625L70 605L80 610L95 585L108 585L130 560M40 560Q90 560 117 505M45 520Q75 510 92 470",
      "M600 300Q560 250 540 290Q505 320 508 400Q480 400 492 440Q510 500 530 513Q545 510 543 482Q600 490 620 493Q640 480 632 443Q580 420 580 370Q585 345 620 355Q630 330 610 305Q580 305 560 335M640 295Q660 240 695 250Q740 290 748 368Q775 360 768 390Q755 450 735 462Q720 460 718 430Q680 450 655 485Q640 470 645 450Q690 390 685 360Q670 315 640 340L627 345M640 295Q620 310 627 345M640 290Q680 260 705 320",
      "M855 220Q845 180 852 170Q890 145 913 155L916 200Q975 205 977 290Q970 380 890 393Q810 390 805 320Q805 250 855 220Q880 195 916 200M873 155L867 65Q870 45 890 52Q900 70 890 85L883 155M868 90L885 90M870 115L886 115M805 320Q780 270 785 275Q795 260 798 330L785 345Q800 370 805 355M800 360Q790 390 800 405Q810 400 808 375",
      "M1110 168A11 23 0 1 0 1132 168A11 23 0 1 0 1110 168M1142 160A15 33 0 1 0 1172 160A15 33 0 1 0 1142 160M1183 176A11 22 0 1 0 1205 176A11 22 0 1 0 1183 176M1122 270Q1115 205 1153 203Q1190 210 1186 280ZM1115 245L1097 243Q1098 190 1130 200M1180 210Q1215 205 1213 262L1190 255",
      "M1508 125Q1505 60 1600 15M1508 125L1600 120M1500 135Q1500 155 1515 145Q1530 165 1545 145L1600 158M1498 175L1600 168M1500 190L1600 195M1505 210Q1505 225 1520 210Q1530 240 1545 215M1508 225Q1510 260 1600 258",
      "M1225 370Q1205 320 1210 285L1228 300L1250 272Q1260 320 1245 350L1230 370ZM1250 320L1273 318Q1280 380 1240 378M1224 370L1226 440M1230 370L1230 440Q1235 470 1245 482M1230 440Q1200 450 1207 500Q1215 545 1245 545Q1275 530 1272 470Q1265 400 1240 405Q1228 420 1230 440",
      "M1362 345Q1410 320 1430 400Q1445 470 1440 530Q1430 555 1355 572L1342 430Q1360 420 1355 405Q1370 380 1362 345ZM1385 340Q1425 380 1428 540M1388 565L1395 620Q1405 625 1407 610L1405 558M1362 445L1372 450L1365 458M1400 430L1392 436L1402 442M1375 492L1400 487M1380 492Q1385 525 1395 515L1395 490",
      "M1465 455Q1480 470 1490 455Q1520 430 1550 435Q1570 470 1560 510Q1535 540 1540 600Q1540 650 1520 658Q1500 650 1495 610Q1480 595 1460 595Q1455 570 1470 530Q1460 490 1465 455ZM950 408L1012 418L1018 445L1030 443L1025 497L1013 487L1008 507L950 492Q945 480 948 450ZM959 437A5 8 0 1 0 969 437A5 8 0 1 0 959 437",
      "M1120 430Q1170 440 1178 480Q1180 550 1140 595Q1110 615 1085 580Q1070 530 1085 470Q1100 435 1120 430ZM1125 470Q1150 460 1158 490Q1155 530 1135 555Q1115 565 1105 540Q1098 490 1125 470ZM1125 470L1120 430M1158 490L1178 485M1135 555L1145 590M1105 540L1082 565M1103 510L1075 490M1120 425Q1125 380 1135 400L1135 432M1165 445Q1190 390 1200 410Q1200 440 1175 470M1075 510Q1050 490 1062 482Q1080 475 1083 482M1172 530Q1200 525 1192 545Q1180 555 1168 548M1115 602L1118 645Q1125 655 1130 640L1132 600",
      "M800 590Q775 620 782 560Q790 550 800 560Q795 530 808 530Q818 570 815 590M815 590L812 470Q820 445 830 470L838 565L845 475Q855 450 862 475L858 600Q875 640 865 690Q840 730 805 715Q790 690 788 610M815 590Q840 575 858 600M812 605Q812 630 838 618L838 655M893 580A20 45 0 1 0 933 580A20 45 0 1 0 893 580M890 752Q880 660 905 640L922 662L933 632Q965 640 978 710Z",
      "M612 572L725 522Q735 520 738 535L753 680Q755 695 745 702L635 765Q622 765 618 740L600 600Q600 580 612 572ZM615 600L722 547L740 682L637 735ZM632 725Q650 650 665 640L718 692M695 655Q715 620 738 650M662 548Q690 490 700 500L712 525M637 765L658 800L700 735M745 590Q765 630 752 660M600 645Q590 660 615 710",
      "M345 505Q335 600 355 640Q370 660 372 690M352 505Q350 600 375 640Q385 650 412 652M425 590Q430 540 470 532Q520 545 525 620Q520 670 458 690Q440 710 425 680Q405 640 412 610Q435 570 450 590Q465 640 458 690M372 690Q370 710 362 730L372 820Q390 845 405 830Q425 825 418 790L392 780L392 755L410 775L445 775M405 830L403 800L390 795M447 755L455 815Q470 840 485 828Q508 825 500 790L480 785L472 760M498 680Q500 730 488 760M465 525Q495 515 503 555M505 605L515 602L512 635M505 635L518 628",
      "M1200 590L1310 547Q1322 545 1325 560L1348 740L1333 760L1335 805L1300 775L1225 812Q1215 810 1212 790L1192 630Q1190 600 1200 590ZM1240 712L1278 692Q1275 740 1258 738Q1245 730 1240 712ZM1250 712L1258 735M1262 705L1266 730M1232 688Q1240 665 1248 680M1305 730L1312 742L1320 705M1320 730L1328 702",
      "M1400 745Q1395 735 1405 740L1420 748L1475 722Q1480 700 1490 697Q1505 710 1500 760Q1515 830 1490 870Q1450 900 1415 870Q1400 830 1400 745M1425 790A8 15 0 1 0 1441 790A8 15 0 1 0 1425 790M1464 770A8 15 0 1 0 1480 770A8 15 0 1 0 1464 770M1450 795L1458 792L1456 800ZM1445 810Q1452 820 1456 800Q1462 820 1470 805M1445 890Q1455 930 1462 960Q1450 990 1465 1003Q1490 1000 1498 985L1500 935L1530 920L1538 900L1545 935M1510 812Q1550 810 1550 770L1540 715Q1555 705 1560 760L1555 830L1565 930Q1560 975 1530 970L1522 955L1540 940",
      "M1070 772L1170 768Q1182 770 1184 790L1184 940Q1182 960 1168 962L1112 965L1085 1012L1078 965Q1058 965 1057 940L1057 800Q1058 775 1070 772ZM15 812L98 802L90 830L95 920Q90 930 15 940Q10 935 10 920L7 830ZM25 848L72 838L75 852L28 865ZM28 883L63 875L65 888L30 897Z",
      "M615 783L605 850L545 940Q535 945 523 910L530 890L585 800ZM540 875L560 915M532 885L552 928M588 800L595 835L606 840M655 838Q625 860 625 900Q630 965 660 968Q700 955 693 905Q690 880 675 870Q672 845 655 838ZM675 870L685 833L683 865",
      "M252 1185L265 890Q268 862 285 862L485 902Q500 905 500 930L490 1235M278 902L487 942L475 1195Q472 1200 465 1197L270 1160Q265 1158 267 1145ZM220 1187L340 1208L342 1225L410 1240L417 1222L525 1245L520 1290M220 1187Q220 1230 245 1240L480 1284",
      "M332 1122L345 1085Q330 1040 340 1000Q355 960 380 960Q420 965 427 1040Q420 1130 380 1137Q365 1135 355 1122ZM345 1108L352 1080Q340 1010 360 990Q400 965 415 1020Q420 1100 380 1118L360 1108ZM365 1010Q360 1040 375 1070Q390 1095 400 1075L390 1060L380 1062Q370 1040 375 1025L370 1010Z",
      "M525 1060Q520 990 570 988Q650 995 665 1080L660 1290M525 1060Q530 1150 580 1150Q580 1190 560 1193L540 1185Q525 1190 532 1215Q540 1235 562 1238L550 1290M605 995L620 968L628 1010L645 998L648 1030L663 1018L665 1055L677 1065L667 1080L677 1100L667 1115L678 1135L667 1150L677 1170L667 1185L675 1205L665 1220L672 1240L662 1255M543 1093L570 1108Q560 1130 550 1120Q542 1110 543 1093ZM640 1235Q600 1190 585 1220Q580 1255 610 1250M615 1070Q630 1065 632 1085",
      "M738 1035L770 995L820 960L850 925L887 1100L830 1180L785 1195ZM775 1165Q830 1110 872 1010M780 1175L848 1090L875 1030M845 1065L885 1115M855 1055L882 1105M770 1000L800 1110M820 965L835 1020M805 1140L820 1185M845 1290Q840 1160 890 1155Q930 1165 942 1290M865 1230Q862 1175 890 1173Q915 1180 918 1220Z",
      "M1278 1085Q1265 990 1270 960Q1270 910 1280 910Q1290 930 1295 985Q1300 1005 1315 1000Q1330 970 1318 930Q1290 895 1292 883Q1310 880 1335 915L1350 980M1348 950Q1345 850 1357 835Q1368 850 1362 970M1368 940Q1375 870 1388 862Q1398 870 1385 950M1370 990Q1395 920 1408 922Q1410 940 1370 1010Q1340 1060 1335 1095M1278 1085L1340 1095L1338 1145Q1330 1158 1280 1145Q1270 1120 1278 1085",
      "M1345 1200Q1380 1040 1410 1028Q1440 1025 1465 1070Q1490 1095 1515 1080Q1550 1085 1545 1130L1540 1290M1345 1200Q1340 1260 1375 1277Q1400 1270 1405 1240Q1425 1230 1470 1290M1458 1160L1468 1115L1473 1120L1465 1170ZM1400 1290Q1420 1250 1440 1290M1155 1290L1255 1218Q1290 1215 1297 1290M1112 1225L1132 1250L1130 1257L1115 1240ZM1103 1262L1128 1270L1125 1280L1103 1275Z",
      "M38 1110Q52 1075 67 1110L73 1190Q65 1220 50 1210Q40 1190 38 1110ZM22 1190Q30 1250 60 1248Q90 1240 85 1165Q88 1155 92 1165Q95 1250 72 1255L75 1290M22 1190Q20 1240 60 1260L65 1290",
      "M565 20L580 160Q582 172 595 170L670 150L680 125M660 0L680 80Q682 105 670 122L658 100L645 0M610 168L612 195L598 215L600 230L655 210L655 155M630 165L635 185L625 215M550 20Q555 90 570 140M575 0Q605 60 635 0M90 0L85 130L140 138L150 0M88 55Q120 80 147 70M112 50L113 25L125 25L127 48ZM235 0L237 22L300 30L330 0M395 0Q405 60 410 85Q420 110 440 105L505 65Q520 50 512 0M380 0L385 70L398 82",
      "M1060 0Q1080 60 1110 50Q1125 60 1115 80Q1090 100 1095 108Q1135 110 1145 50Q1140 10 1120 0M1215 0Q1235 50 1195 95Q1200 115 1240 80Q1265 20 1250 0M1250 50Q1300 60 1330 0M958 150Q955 110 975 95L995 60L1008 82L1035 80L1050 52L1055 90Q1070 100 1055 118L1035 115Q1010 175 985 170Q965 170 958 150ZM975 95Q990 120 990 170M1000 130Q1000 105 1015 110Q1020 125 1008 130M1380 0L1390 35L1490 0",
    ],
  },
];

/* letters that belong to the doodles: x, y, size, rotation, text */
const letters: [number, number, number, number, string][] = [
  [243, 246, 46, -12, "42"],
  [890, 306, 54, -12, "24"],
  [530, 238, 26, 0, "W"],
  [800, 432, 44, 22, "B"],
  [826, 454, 40, 24, "F"],
  [848, 474, 40, 24, "F"],
  [686, 1280, 38, 0, "Hi"],
  [595, 1352, 46, 8, "文"],
  [646, 1386, 60, 0, "A"],
  [1094, 830, 46, 12, "文"],
  [1132, 838, 58, -6, "A"],
];

const rows = (list?: string) => (list ? list.trim().split(/\s+/).map((item) => item.split(",")) : []);

const DoodleSheet = ({ sheet }: { sheet: Sheet }) => {
  const px = (x: string) => Math.round(sheet.ox + Number(x) * sheet.sx);
  const py = (y: string) => Math.round(sheet.oy + Number(y) / 3);
  const stamp = (d: string, x: string, y: string, size: string, turn: string, key: string) => (
    <path key={key} d={d} transform={`translate(${px(x)} ${py(y)}) rotate(${turn}) scale(${size})`} vectorEffect="non-scaling-stroke" />
  );
  return (
    <g>
      {rows(sheet.dots).map(([x, y, r], i) => <circle key={`d${i}`} cx={px(x)} cy={py(y)} r={Math.max(1, Number(r) - 0.5)} />)}
      {rows(sheet.rings).map(([x, y, r], i) => <circle key={`r${i}`} cx={px(x)} cy={py(y)} r={r} />)}
      {rows(sheet.stars).map(([x, y, s, t], i) => stamp(starPath, x, y, s, t, `s${i}`))}
      {rows(sheet.sparkles).map(([x, y, s, t], i) => stamp(sparklePath, x, y, s, t, `p${i}`))}
      {rows(sheet.shapes).map(([name, x, y, s, t], i) => stamp(glyphs[name], x, y, s, t, `g${i}`))}
      <g transform={`translate(${sheet.ox} ${sheet.oy}) scale(${sheet.sx} 0.3333)`}>
        {sheet.lines.map((d, i) => <path key={i} d={d} vectorEffect="non-scaling-stroke" />)}
      </g>
    </g>
  );
};

const WallpaperArt = styled.svg`
  position: absolute;
  inset: 0;
  width: 100%;
  height: 100%;
  fill: none;
  stroke: ${color.doodle};
  stroke-width: 2;
  stroke-linejoin: round;
  stroke-linecap: round;
  font-family: "Noto Sans", "Noto Sans CJK SC", sans-serif;
  font-weight: 700;
`;

const Wallpaper = () => (
  <WallpaperArt aria-hidden="true">
    <g transform="translate(0 -15)">
      <g id="doodles">
        {sheets.map((sheet, i) => <DoodleSheet key={i} sheet={sheet} />)}
        {letters.map(([x, y, size, turn, text], i) => (
          <text key={i} fontSize={size} transform={`translate(${x} ${y}) rotate(${turn})`}>{text}</text>
        ))}
      </g>
      <use href="#doodles" x={-TILE} />
      <use href="#doodles" x={TILE} />
      <use href="#doodles" x={TILE * 2} />
    </g>
  </WallpaperArt>
);

/* ---------- chat ---------- */

const Window = styled.div`
  display: flex;
  flex-direction: column;
  height: 100vh;
  background: ${color.chrome};
`;

const HeaderEdge = styled.header`
  flex: none;
  height: 15px;
  border-bottom: 2px solid ${color.edge};
`;

const FooterEdge = styled.footer`
  flex: none;
  height: 6px;
  border-top: 2px solid ${color.edge};
`;

const Conversation = styled.main`
  position: relative;
  flex: 1;
  min-height: 0;
  background: ${color.wallpaper};
`;

const Scroller = styled.div`
  position: relative;
  height: 100%;
  overflow-y: auto;
  scrollbar-width: none;
  &::-webkit-scrollbar { display: none; }
`;

const MessageList = styled.ol`
  display: flex;
  flex-direction: column;
  gap: 23px;
  margin: 0;
  padding: 0 28px 16px 61px;
  list-style: none;
`;

const Group = styled.li<{ $out?: boolean }>`
  display: flex;
  flex-direction: column;
  align-items: ${(p) => (p.$out ? "flex-end" : "flex-start")};
  gap: ${(p) => (p.$out ? 4 : 5)}px;
`;

const Bubble = styled.article<{ $out?: boolean; $tail?: boolean }>`
  position: relative;
  max-width: 1200px;
  padding: 13px 20px 10px 16px;
  border-radius: 12px;
  background: ${(p) => (p.$out ? color.outgoing : color.incoming)};
  box-shadow: inset 0 1px 0 ${(p) => (p.$out ? color.outgoingEdge : color.incomingEdge)}, 0 1px 2px rgba(0, 0, 0, 0.35);
  ${(p) => p.$tail && (p.$out ? "border-top-right-radius: 0;" : "border-top-left-radius: 0;")}
`;

const Tail = styled.svg<{ $out?: boolean }>`
  position: absolute;
  top: 0;
  ${(p) => (p.$out ? "left: 100%;" : "right: 100%; transform: scaleX(-1);")}
  width: 14px;
  height: 20px;
  fill: ${(p) => (p.$out ? color.outgoing : color.incoming)};
  stroke: ${(p) => (p.$out ? color.outgoingEdge : color.incomingEdge)};
`;

const Quote = styled.blockquote<{ $own?: boolean }>`
  margin: 7px 0 8px;
  padding: 8px 20px 16px 12px;
  border-left: 8px solid ${(p) => (p.$own ? color.blue : color.green)};
  border-radius: 8px;
  background: ${(p) => (p.$own ? color.incomingQuote : color.outgoingQuote)};
  box-shadow: ${(p) => (p.$own ? "inset 0 2px 0 #8f8f8f, " : "")}0 1px 2px rgba(0, 0, 0, 0.3);
`;

const QuoteAuthor = styled.cite<{ $own?: boolean }>`
  display: block;
  color: ${(p) => (p.$own ? color.blue : color.green)};
  font-size: 18px;
  font-style: normal;
  font-weight: 600;
  line-height: 28px;
`;

const QuoteText = styled.p`
  max-width: 732px;
  color: rgba(255, 255, 255, 0.75);
  font-size: 19px;
  line-height: 32px;
`;

type Layout = "inline" | "stacked";

const Body = styled.div<{ $layout: Layout; $quoted?: boolean }>`
  display: grid;
  grid-template-columns: ${(p) => (p.$layout === "inline" ? "1fr auto" : "1fr")};
  align-items: end;
  padding-top: ${(p) => (p.$quoted ? 1 : 0)}px;
  padding-bottom: ${(p) => (p.$layout === "inline" ? 2 : 0)}px;
`;

const Paragraph = styled.p`
  margin-bottom: 32px;
  padding-right: 20px;
  font-size: 23px;
  line-height: 32px;
`;

const Text = styled.p<{ $layout: Layout }>`
  padding-right: ${(p) => (p.$layout === "inline" ? 37 : 20)}px;
  padding-bottom: ${(p) => (p.$layout === "inline" ? 11 : 3)}px;
  font-size: 23px;
  line-height: 32px;
`;

const Meta = styled.div<{ $out?: boolean }>`
  display: flex;
  justify-self: end;
  align-items: center;
  gap: 6px;
  margin-right: ${(p) => (p.$out ? -1 : -4)}px;
  color: rgba(255, 255, 255, ${(p) => (p.$out ? 0.5 : 0.55)});
  font-size: 15px;
  line-height: 20px;
  white-space: nowrap;
`;

const TickIcon = styled.svg`
  width: 19px;
  height: 14px;
  fill: none;
  stroke: ${color.tick};
  stroke-width: 2.4;
`;

const Ticks = () => (
  <TickIcon viewBox="0 0 19 14" role="img" aria-label="Read">
    <path d="M1 8L4.5 12L12.5 1.5M8.5 10.5L10 12L18 1.5" />
  </TickIcon>
);

const ScrollButton = styled.button`
  position: absolute;
  right: 12px;
  bottom: 91px;
  display: flex;
  align-items: center;
  justify-content: center;
  width: 80px;
  height: 83px;
  padding: 0 0 4px;
  border: 0;
  border-radius: 14px;
  background: #25302d;
  box-shadow: 0 2px 8px rgba(0, 0, 0, 0.3);
  color: #fff;
`;

type Message = {
  /* paragraphs that come before the closing one */
  lead?: string[];
  text: string;
  time: string;
  layout?: Layout;
  quote?: { author: string; text: string };
};

const conversation: { out: boolean; tail: boolean; messages: Message[] }[] = [
  {
    out: true,
    tail: false,
    messages: [
      { text: "Thank you!!!", time: "2:33 PM", quote: { author: "Mao Yun Xi", text: "It's the commission I paid for you" } },
      { text: "I didn't know you paid them!!!", time: "2:33 PM" },
      { text: "When did you pay???", time: "2:34 PM" },
    ],
  },
  {
    out: false,
    tail: true,
    messages: [
      {
        text: "I'm not paying yet, just scraping the money together. When you collect the money, you have to pay me",
        time: "2:34 PM",
        layout: "stacked",
      },
    ],
  },
  {
    out: true,
    tail: true,
    messages: [
      {
        text: "?",
        time: "2:35 PM",
        quote: {
          author: "Mao Yun Xi",
          text: "I'm not paying yet, just scraping the money together. When you collect the money, you have to pay me",
        },
      },
      { text: "Explain", time: "2:35 PM" },
    ],
  },
  {
    out: false,
    tail: true,
    messages: [
      {
        text: "Have you been having trouble thinking recently? You don’t understand what the current situation is like?",
        time: "2:35 PM",
        layout: "stacked",
      },
      {
        text: "Once you can claim your funds. You need to give me my money back",
        time: "2:36 PM",
        quote: { author: "You", text: "?" },
      },
    ],
  },
  {
    out: true,
    tail: true,
    messages: [
      {
        lead: [
          "Please tell me...",
          "Because right now I have friends on suicide watch and in total financial devastation...",
        ],
        text: "So please say",
        time: "2:36 PM",
      },
      {
        text: "Of course I will",
        time: "2:36 PM",
        quote: { author: "Mao Yun Xi", text: "Once you can claim your funds. You need to give me my money back" },
      },
      { text: "I wanted to give you all my KCBT money", time: "2:37 PM" },
    ],
  },
];

const ChatMessage = ({ message, out, tail }: { message: Message; out: boolean; tail: boolean }) => {
  const layout = message.layout ?? "inline";
  const own = message.quote?.author === "You";
  return (
    <Bubble $out={out} $tail={tail}>
      {tail && (
        <Tail $out={out} viewBox="0 0 14 20" aria-hidden="true">
          <path d="M0 0H12Q15 1 13 4L2 16Q0 18 0 20Z" stroke="none" />
          <path d="M0 .5H12" />
        </Tail>
      )}
      {message.quote && (
        <Quote $own={own}>
          <QuoteAuthor $own={own}>{message.quote.author}</QuoteAuthor>
          <QuoteText>{message.quote.text}</QuoteText>
        </Quote>
      )}
      {message.lead?.map((paragraph) => <Paragraph key={paragraph}>{paragraph}</Paragraph>)}
      <Body $layout={layout} $quoted={Boolean(message.quote)}>
        <Text $layout={layout}>{message.text}</Text>
        <Meta $out={out}>
          <time>{message.time}</time>
          {out && <Ticks />}
        </Meta>
      </Body>
    </Bubble>
  );
};

const App = () => {
  const scroller = useRef<HTMLDivElement>(null);

  useLayoutEffect(() => {
    if (scroller.current) scroller.current.scrollTop = 35;
  }, []);

  const toBottom = () => scroller.current?.scrollTo({ top: scroller.current.scrollHeight, behavior: "smooth" });

  return (
    <Window>
      <GlobalStyle />
      <HeaderEdge />
      <Conversation>
        <Wallpaper />
        <Scroller ref={scroller}>
          <MessageList>
            {conversation.map((group, g) => (
              <Group key={g} $out={group.out}>
                {group.messages.map((message, m) => (
                  <ChatMessage key={m} message={message} out={group.out} tail={group.tail && m === 0} />
                ))}
              </Group>
            ))}
          </MessageList>
        </Scroller>
        <ScrollButton type="button" aria-label="Scroll to latest message" onClick={toBottom}>
          <svg width="32" height="34" viewBox="0 0 32 34" fill="none" stroke="currentColor" strokeWidth="2" aria-hidden="true">
            <path d="M16 1V32M1 17.5L16 32L31 17.5" />
          </svg>
        </ScrollButton>
      </Conversation>
      <FooterEdge />
    </Window>
  );
};

export default App;
